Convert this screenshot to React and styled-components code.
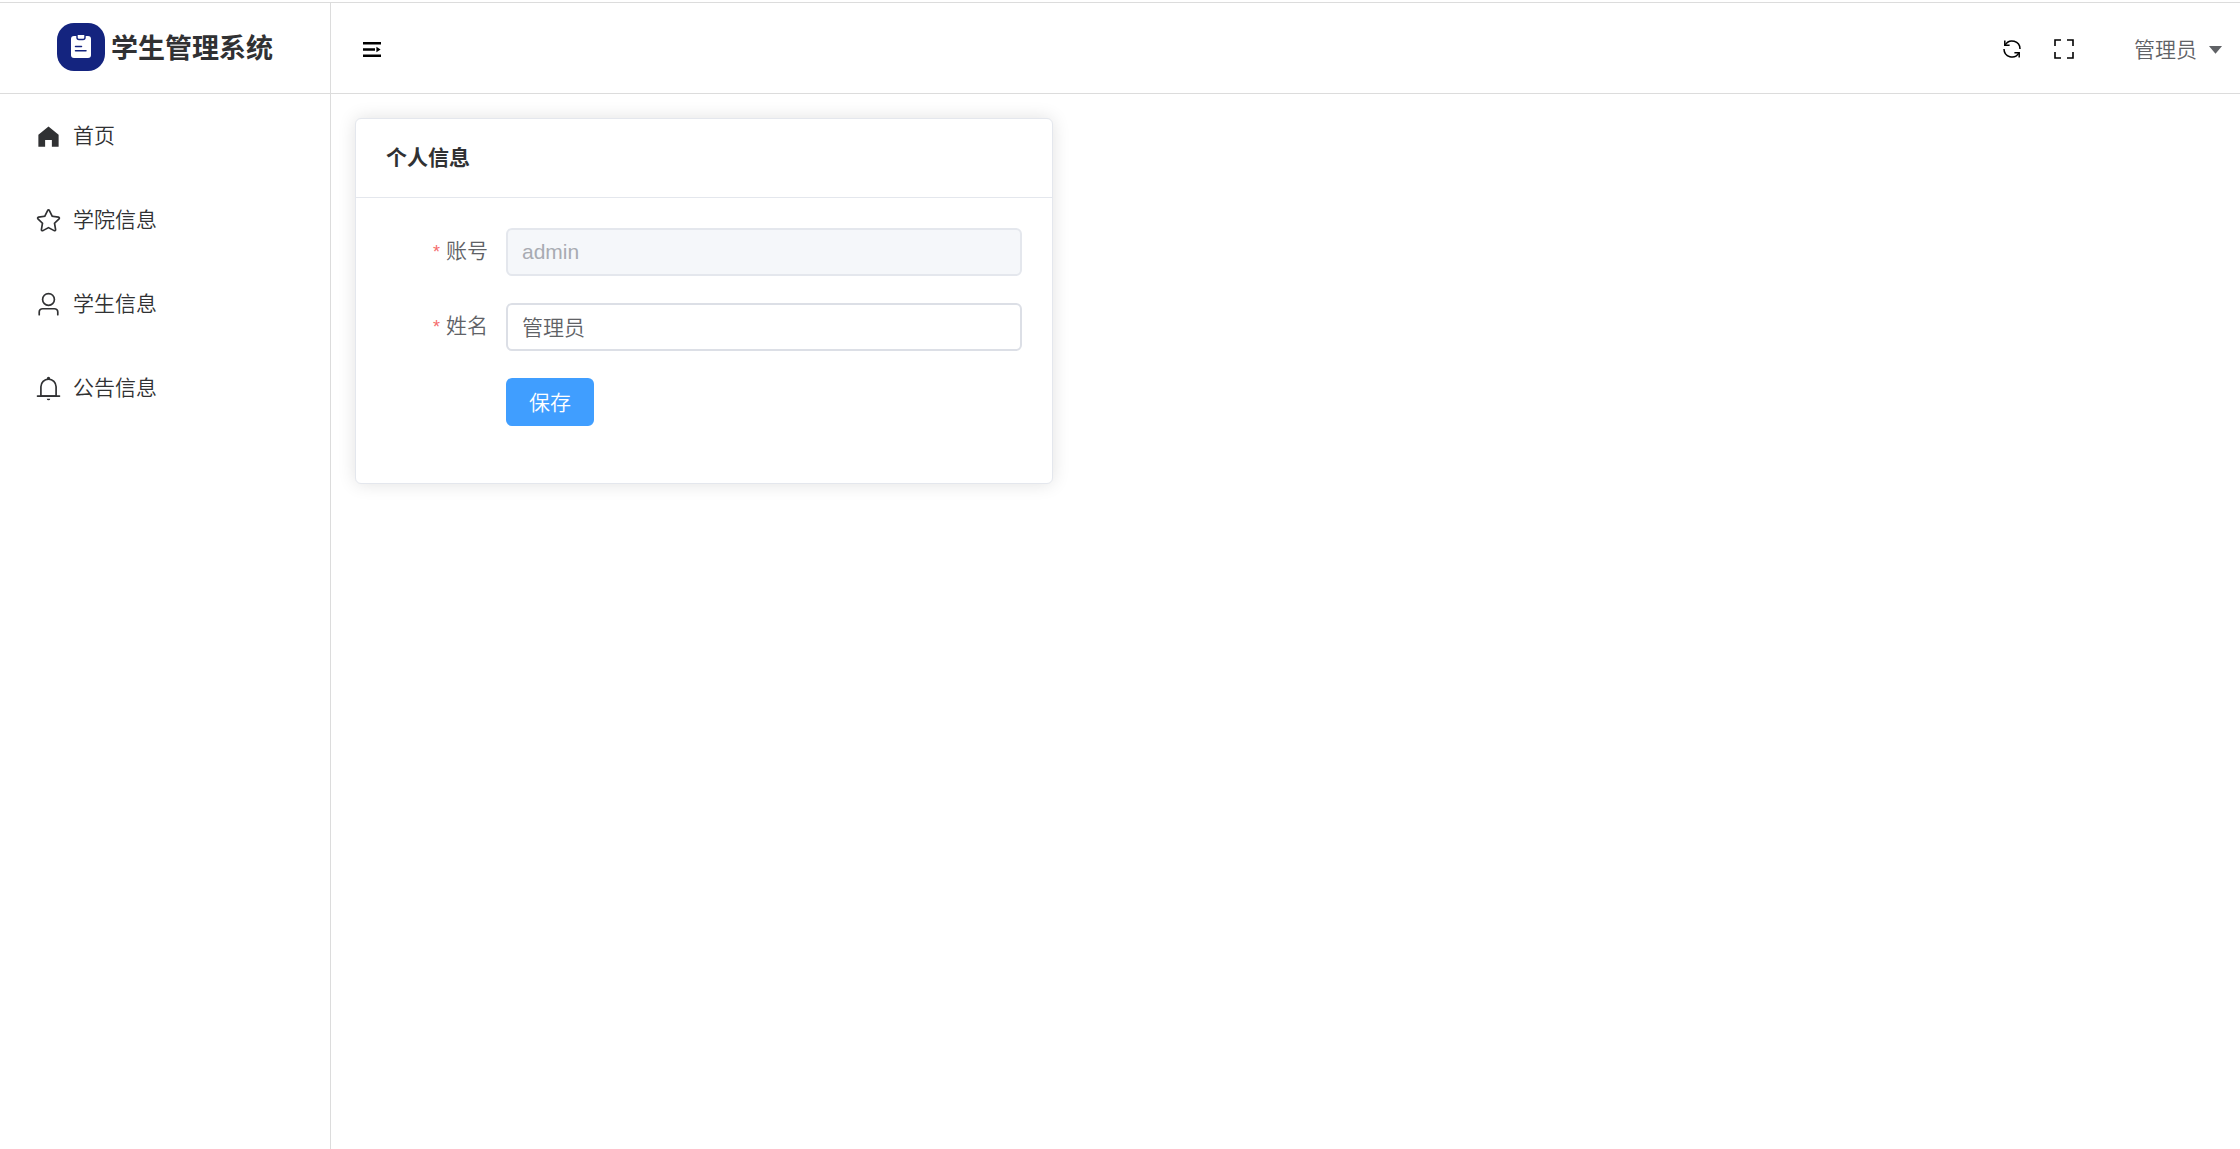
import React, { useState } from 'react'
import styled, { createGlobalStyle } from 'styled-components'

const menu = [
  {
    title: '首页',
    paths: ['M512 128 128 447.936V896h255.936V640H640v256h255.936V447.936z'],
  },
  {
    title: '学院信息',
    paths: [
      'm512 747.84 228.16 119.936a6.4 6.4 0 0 0 9.28-6.72l-43.52-254.08 184.512-179.904a6.4 6.4 0 0 0-3.52-10.88l-255.104-37.12L517.76 147.904a6.4 6.4 0 0 0-11.52 0L392.192 379.072l-255.104 37.12a6.4 6.4 0 0 0-3.52 10.88L318.08 606.976l-43.584 254.08a6.4 6.4 0 0 0 9.28 6.72zM313.6 924.48a70.4 70.4 0 0 1-102.144-74.24l37.888-220.864L88.96 472.96A70.4 70.4 0 0 1 128 352.896l221.76-32.256 99.2-200.96a70.4 70.4 0 0 1 126.208 0l99.2 200.96 221.824 32.256a70.4 70.4 0 0 1 39.04 120.064L774.72 629.376l37.888 220.8a70.4 70.4 0 0 1-102.144 74.24L512 820.096l-198.4 104.32z',
    ],
  },
  {
    title: '学生信息',
    paths: [
      'M512 512a192 192 0 1 0 0-384 192 192 0 0 0 0 384m0 64a256 256 0 1 1 0-512 256 256 0 0 1 0 512m320 320v-96a96 96 0 0 0-96-96H288a96 96 0 0 0-96 96v96a32 32 0 1 1-64 0v-96a160 160 0 0 1 160-160h448a160 160 0 0 1 160 160v96a32 32 0 1 1-64 0',
    ],
  },
  {
    title: '公告信息',
    paths: [
      'M512 64a64 64 0 0 1 64 64v64H448v-64a64 64 0 0 1 64-64',
      'M256 768h512V448a256 256 0 1 0-512 0zm256-640a320 320 0 0 1 320 320v384H192V448a320 320 0 0 1 320-320',
      'M96 768h832q32 0 32 32t-32 32H96q-32 0-32-32t32-32m352 128h128a64 64 0 0 1-128 0',
    ],
  },
]

const Icon = ({ size, paths }) => (
  <svg width={size} height={size} viewBox='0 0 1024 1024' fill='currentColor' aria-hidden='true'>
    {paths.map((d) => (
      <path key={d} d={d} />
    ))}
  </svg>
)

const Logo = () => (
  <svg width='48' height='48' viewBox='0 0 48 48' aria-hidden='true'>
    <rect width='48' height='48' rx='17' fill='#14247f' />
    <rect x='14' y='13' width='20' height='22' rx='3' fill='#fff' />
    <path d='M20 12v2.5a2 2 0 0 0 2 2h4a2 2 0 0 0 2-2V12' fill='#fff' stroke='#14247f' strokeWidth='1.4' />
    <path d='M18.5 23.5h6M18.5 27.7h10.5' stroke='#14247f' strokeWidth='1.5' strokeLinecap='round' />
  </svg>
)

const App = () => {
  const [name, setName] = useState('管理员')

  return (
    <>
      <GlobalStyle />
      <Layout>
        <Aside>
          <Brand>
            <Logo />
            <h1>学生管理系统</h1>
          </Brand>
          <nav>
            {menu.map((item) => (
              <MenuLink key={item.title} href='#'>
                <Icon size={27} paths={item.paths} />
                <span>{item.title}</span>
              </MenuLink>
            ))}
          </nav>
        </Aside>
        <Container>
          <Header>
            <IconButton aria-label='折叠菜单'>
              <svg width='18' height='15' viewBox='0 0 18 15' fill='currentColor'>
                <path d='M0 0h18v2.6H0zM0 6.2h12v2.6H0zM0 12.4h18V15H0zM13.4 4.7l4.2 2.8-4.2 2.8z' />
              </svg>
            </IconButton>
            <Tools>
              <IconButton aria-label='刷新'>
                <svg width='20' height='20' viewBox='0 0 20 20' fill='none' stroke='currentColor' strokeWidth='1.5'>
                  <path d='M3.2 5.8A8 8 0 0 1 18 10M16.8 14.2A8 8 0 0 1 2 10' />
                  <path d='M2.8 1.6v4.6h4.8M17.2 18.4v-4.6h-4.8' />
                </svg>
              </IconButton>
              <IconButton aria-label='全屏'>
                <svg width='20' height='20' viewBox='0 0 20 20' fill='none' stroke='currentColor' strokeWidth='1.6'>
                  <path d='M1 7V1h6M13 1h6v6M19 13v6h-6M7 19H1v-6' />
                </svg>
              </IconButton>
              <UserButton>
                管理员
                <Icon size={21} paths={['m192 384 320 384 320-384z']} />
              </UserButton>
            </Tools>
          </Header>
          <Main>
            <Card>
              <CardTitle>个人信息</CardTitle>
              <Form onSubmit={(e) => e.preventDefault()}>
                <Label htmlFor='account'>账号</Label>
                <Input id='account' value='admin' disabled />
                <Label htmlFor='name'>姓名</Label>
                <Input id='name' value={name} onChange={(e) => setName(e.target.value)} />
                <SaveButton type='submit'>保存</SaveButton>
              </Form>
            </Card>
          </Main>
        </Container>
      </Layout>
    </>
  )
}

const GlobalStyle = createGlobalStyle`
  * {
    box-sizing: border-box;
  }
  body {
    margin: 0;
    background: #fff;
    color: #303133;
    font-family: 'Liberation Sans', 'Noto Sans CJK SC', sans-serif;
    font-size: 21px;
    font-weight: 350;
  }
  button, input {
    font: inherit;
  }
  svg {
    display: block;
    flex-shrink: 0;
  }
`
const Layout = styled.div`
  display: flex;
  min-height: 100vh;
  padding-top: 2px;
`
const Aside = styled.aside`
  width: 331px;
  flex-shrink: 0;
  border-top: 1px solid #dcdcdc;
  border-right: 1px solid #dcdcdc;
`
const Brand = styled.div`
  display: flex;
  align-items: center;
  justify-content: center;
  gap: 6px;
  height: 91px;
  padding-bottom: 2px;
  border-bottom: 1px solid #dcdcdc;
  h1 {
    margin: 0;
    padding-top: 3px;
    font-size: 27px;
    line-height: 36px;
  }
`
const MenuLink = styled.a`
  display: flex;
  align-items: center;
  gap: 11px;
  height: 84px;
  padding: 0 35px;
  color: #303133;
  text-decoration: none;
  span {
    padding-bottom: 5px;
  }
`
const Container = styled.div`
  flex: 1;
  min-width: 0;
`
const Header = styled.header`
  display: flex;
  align-items: center;
  justify-content: space-between;
  height: 92px;
  padding: 2px 14px 0 32px;
  border-top: 1px solid #dcdcdc;
  border-bottom: 1px solid #dcdcdc;
`
const Tools = styled.div`
  display: flex;
  align-items: center;
  gap: 32px;
`
const IconButton = styled.button`
  padding: 0;
  border: 0;
  background: none;
  color: #000;
  cursor: pointer;
`
const UserButton = styled(IconButton)`
  display: flex;
  align-items: center;
  gap: 8px;
  margin-left: 28px;
  padding-bottom: 2px;
  color: #606266;
`
const Main = styled.main`
  padding: 24px;
`
const Card = styled.section`
  width: 37.5%;
  min-width: 480px;
  border: 1px solid #e4e7ed;
  border-radius: 6px;
  background: #fff;
  box-shadow: 0 0 18px rgba(0, 0, 0, 0.12);
`
const CardTitle = styled.h2`
  margin: 0;
  padding: 24px 30px;
  border-bottom: 1px solid #e4e7ed;
  font-size: 21px;
  line-height: 30px;
`
const Form = styled.form`
  display: grid;
  grid-template-columns: 102px 1fr;
  column-gap: 18px;
  row-gap: 27px;
  padding: 30px 30px 57px;
`
const Label = styled.label`
  color: #606266;
  line-height: 46px;
  text-align: right;
  &::before {
    content: '*';
    margin-right: 6px;
    color: #f56c6c;
    font-size: 18px;
  }
`
const Input = styled.input`
  width: 100%;
  height: 48px;
  padding: 0 14px 2px;
  border: 2px solid #dcdfe6;
  border-radius: 6px;
  background: #fff;
  color: #606266;
  outline: none;
  &:disabled {
    padding-bottom: 0;
    border-color: #e4e7ed;
    background: #f5f7fa;
    color: #a8abb2;
  }
`
const SaveButton = styled.button`
  grid-column: 2;
  justify-self: start;
  height: 48px;
  padding: 0 23px 3px;
  border: 0;
  border-radius: 6px;
  background: #409eff;
  color: #fff;
  cursor: pointer;
`
export default App
